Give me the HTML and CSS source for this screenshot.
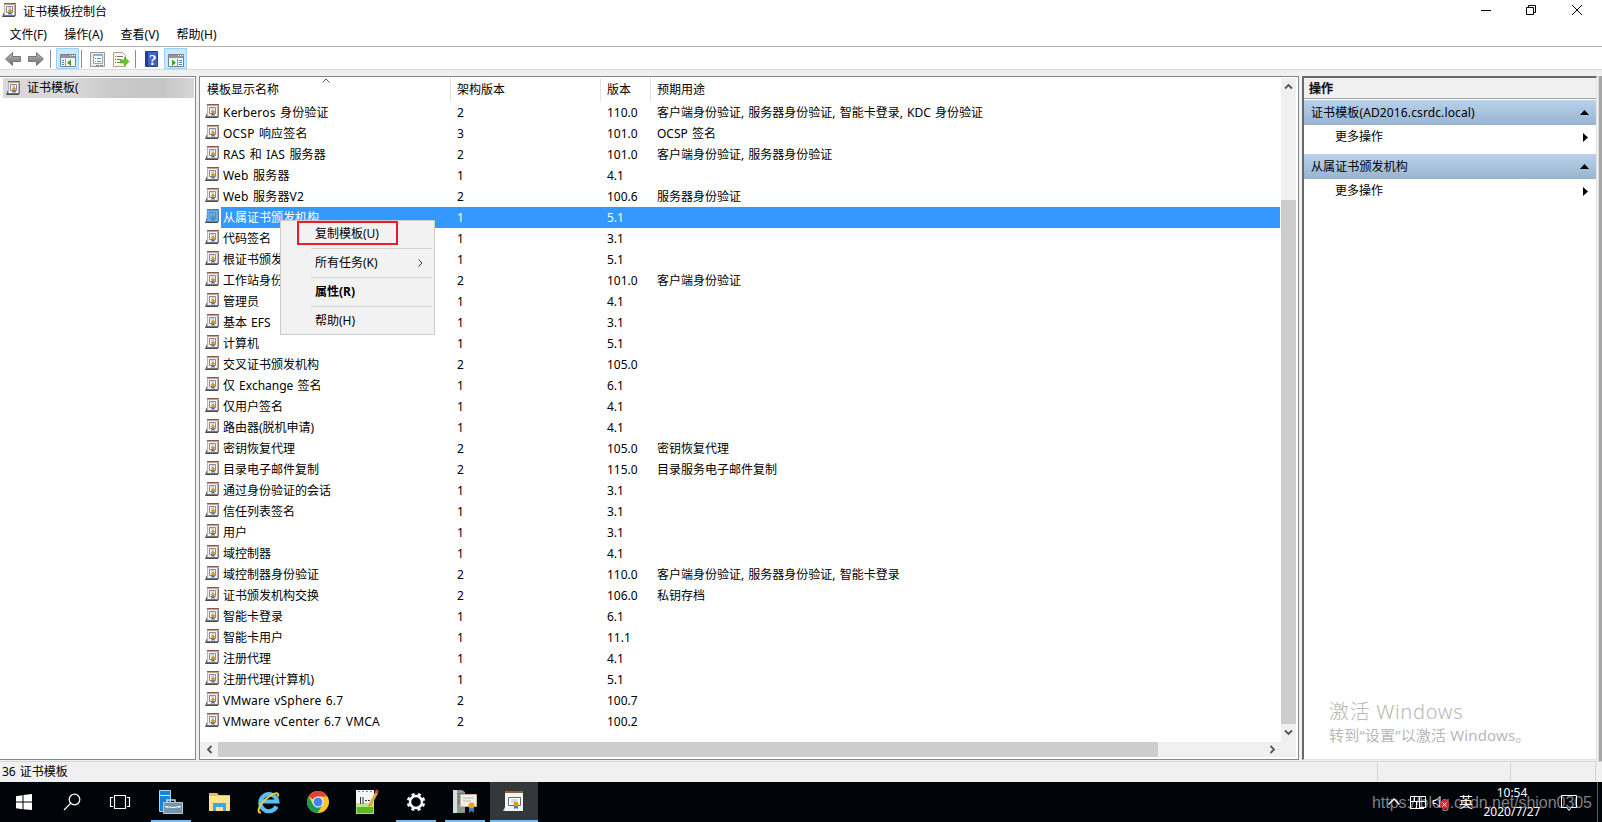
FILE: index.html
```html
<!DOCTYPE html>
<html lang="zh-CN">
<head>
<meta charset="utf-8">
<title>证书模板控制台</title>
<link rel="stylesheet" href="styles.css">
</head>
<body>
<svg class="defs" width="0" height="0">
  <symbol id="cert" viewBox="0 0 14 14">
    <path d="M0 14 2 9h11v5z" fill="#4a4a4a"/>
    <path d="M1.500 13 3 10H13v3z" fill="#d8d8d8"/>
    <path d="M2 0h12v13H2z" fill="#807873"/>
    <path d="M2 0h11v12H2z" fill="#b9b4b4"/>
    <path d="M3 2h9v10H3z" fill="#f1f0f2"/>
    <path d="M2 0h12v1H2z" fill="#8a5a48"/><path d="M2 1h12v1H2z" fill="#c3a598"/>
    <path d="M4.500 3.500h6v6h-6z" fill="#fff" stroke="#85889a"/>
    <path d="M6 5h3" stroke="#9ba6cc"/>
    <path d="M6.500 9h3v3L8 11l-1.500 1z" fill="#3564a8"/>
    <path d="M8 5.500 10.300 7.800 8 10.300 5.700 7.800z" fill="#dd9418"/>
  </symbol>
</svg>
<div class="window">
  <header class="title">
    <svg class="app-icon"><use href="#cert"/></svg><span>证书模板控制台</span>
    <svg class="caption" viewBox="0 0 104 12" fill="none" stroke="#000">
      <path d="M0 6.500h10M45.500 3.500h7v7h-7zM47.500 3.500v-2h7v7h-2M91 1l10 10M101 1 91 11"/>
    </svg>
  </header>
  <nav class="menubar"><span>文件(F)</span><span>操作(A)</span><span>查看(V)</span><span>帮助(H)</span></nav>
  <div class="toolbar">
    <svg width="200" height="22" viewBox="0 0 200 22">
      <defs><linearGradient id="ar" x2="0" y2="1"><stop stop-color="#b8b8b8"/><stop offset="1" stop-color="#6d6d6d"/></linearGradient></defs>
      <path d="M5.500 12 12.500 5.500V9.500H20.500V14.500H12.500V18.500z" fill="url(#ar)" stroke="#777"/>
      <path d="M43.500 12 36.500 5.500V9.500H28.500V14.500H36.500V18.500z" fill="url(#ar)" stroke="#777"/>
      <path d="M50.500 3v18M81.500 3v18M135.500 3v18" stroke="#8c8c8c"/>
      <path d="M56.500 1.500h22v20h-22zM164.500 1.500h22v20h-22z" fill="#cce8ff" stroke="#99d1ff"/>
      <path d="M60.500 7.500h15v12h-15z" fill="#f7f7f7" stroke="#7a7f88"/>
      <path d="M61 8h14v3H61z" fill="#8d95a0"/><path d="M61 11.500h14" stroke="#eef"/>
      <path d="M70 8.500h1M72 8.500h1M74 8.500h1" stroke="#fff"/>
      <path d="M65.500 12v7" stroke="#8d95a0"/>
      <path d="M62 13.500h2M62 15.500h2M62 17.500h2" stroke="#3f7fc5"/>
      <path d="M71 12.500v6.500l-4-3.200z" fill="#37a51f"/>
      <path d="M90.500 5.500h14v14h-14z" fill="#eee" stroke="#999"/>
      <path d="M93.500 7.500h9v9h-9z" fill="#fff" stroke="#9aa3ad"/>
      <path d="M94 8.500h8" stroke="#9ab4d0"/><path d="M95 11.500h1M95 14.500h1M97 11.500h4M97 14.500h4" stroke="#4d93d0"/><path d="M96 18.500h3M100 18.500h3" stroke="#888"/>
      <path d="M113.500 5.500h9l3 3v11h-12z" fill="#fdf8df" stroke="#a9a595"/>
      <path d="M115 9.500h1M115 12.500h1M115 15.500h1M117 9.500h6M117 12.500h4M117 15.500h4" stroke="#68758d"/>
      <path d="M120.500 13h4v-3l4.500 4.500L124.500 19v-3h-4z" fill="#65c62f" stroke="#4c9e24" stroke-width=".6"/>
      <path d="M145.500 4.500h12v15h-12z" fill="#3f62c5" stroke="#253d89"/><path d="M146 5h2v14h-2z" fill="#223d94"/>
      <text x="149" y="17.500" class="help">?</text>
      <path d="M168.500 7.500h15v12h-15z" fill="#f7f7f7" stroke="#7a7f88"/>
      <path d="M169 8h14v3h-14z" fill="#8d95a0"/><path d="M178 8.500h1M180 8.500h1M182 8.500h1" stroke="#fff"/>
      <path d="M177.500 12v7" stroke="#8d95a0"/><path d="M179 13.500h3M179 15.500h3M179 17.500h3" stroke="#3f7fc5"/>
      <path d="M172 12.500v6.500l4-3.200z" fill="#37a51f"/>
    </svg>
  </div>
  <main class="body">
    <section class="tree"><div class="node"><svg class="app-icon"><use href="#cert"/></svg><span>证书模板(</span></div></section>
    <section class="list">
      <div class="grid">
        <div class="head"><span class="h1">模板显示名称</span><span>架构版本</span><span>版本</span><span>预期用途</span>
          <svg class="sort" viewBox="0 0 8 5"><path d="M.5 4.500 4 1l3.500 3.500" fill="none" stroke="#555"/></svg>
        </div>
        <div class="row latin"><svg><use href="#cert"/></svg><span>Kerberos 身份验证</span><span>2</span><span>110.0</span><span>客户端身份验证, 服务器身份验证, 智能卡登录, KDC 身份验证</span></div>
        <div class="row latin"><svg><use href="#cert"/></svg><span>OCSP 响应签名</span><span>3</span><span>101.0</span><span>OCSP 签名</span></div>
        <div class="row latin"><svg><use href="#cert"/></svg><span>RAS 和 IAS 服务器</span><span>2</span><span>101.0</span><span>客户端身份验证, 服务器身份验证</span></div>
        <div class="row latin"><svg><use href="#cert"/></svg><span>Web 服务器</span><span>1</span><span>4.1</span><span></span></div>
        <div class="row latin"><svg><use href="#cert"/></svg><span>Web 服务器V2</span><span>2</span><span>100.6</span><span>服务器身份验证</span></div>
        <div class="row selected"><svg><use href="#cert"/><path class="tint" d="M2 0h12v13H1z"/></svg><span>从属证书颁发机构</span><span>1</span><span>5.1</span><span></span></div>
        <div class="row"><svg><use href="#cert"/></svg><span>代码签名</span><span>1</span><span>3.1</span><span></span></div>
        <div class="row"><svg><use href="#cert"/></svg><span>根证书颁发</span><span>1</span><span>5.1</span><span></span></div>
        <div class="row"><svg><use href="#cert"/></svg><span>工作站身份</span><span>2</span><span>101.0</span><span>客户端身份验证</span></div>
        <div class="row"><svg><use href="#cert"/></svg><span>管理员</span><span>1</span><span>4.1</span><span></span></div>
        <div class="row"><svg><use href="#cert"/></svg><span>基本 EFS</span><span>1</span><span>3.1</span><span></span></div>
        <div class="row"><svg><use href="#cert"/></svg><span>计算机</span><span>1</span><span>5.1</span><span></span></div>
        <div class="row"><svg><use href="#cert"/></svg><span>交叉证书颁发机构</span><span>2</span><span>105.0</span><span></span></div>
        <div class="row"><svg><use href="#cert"/></svg><span>仅 Exchange 签名</span><span>1</span><span>6.1</span><span></span></div>
        <div class="row"><svg><use href="#cert"/></svg><span>仅用户签名</span><span>1</span><span>4.1</span><span></span></div>
        <div class="row"><svg><use href="#cert"/></svg><span>路由器(脱机申请)</span><span>1</span><span>4.1</span><span></span></div>
        <div class="row"><svg><use href="#cert"/></svg><span>密钥恢复代理</span><span>2</span><span>105.0</span><span>密钥恢复代理</span></div>
        <div class="row"><svg><use href="#cert"/></svg><span>目录电子邮件复制</span><span>2</span><span>115.0</span><span>目录服务电子邮件复制</span></div>
        <div class="row"><svg><use href="#cert"/></svg><span>通过身份验证的会话</span><span>1</span><span>3.1</span><span></span></div>
        <div class="row"><svg><use href="#cert"/></svg><span>信任列表签名</span><span>1</span><span>3.1</span><span></span></div>
        <div class="row"><svg><use href="#cert"/></svg><span>用户</span><span>1</span><span>3.1</span><span></span></div>
        <div class="row"><svg><use href="#cert"/></svg><span>域控制器</span><span>1</span><span>4.1</span><span></span></div>
        <div class="row"><svg><use href="#cert"/></svg><span>域控制器身份验证</span><span>2</span><span>110.0</span><span>客户端身份验证, 服务器身份验证, 智能卡登录</span></div>
        <div class="row"><svg><use href="#cert"/></svg><span>证书颁发机构交换</span><span>2</span><span>106.0</span><span>私钥存档</span></div>
        <div class="row"><svg><use href="#cert"/></svg><span>智能卡登录</span><span>1</span><span>6.1</span><span></span></div>
        <div class="row"><svg><use href="#cert"/></svg><span>智能卡用户</span><span>1</span><span>11.1</span><span></span></div>
        <div class="row"><svg><use href="#cert"/></svg><span>注册代理</span><span>1</span><span>4.1</span><span></span></div>
        <div class="row"><svg><use href="#cert"/></svg><span>注册代理(计算机)</span><span>1</span><span>5.1</span><span></span></div>
        <div class="row latin"><svg><use href="#cert"/></svg><span>VMware vSphere 6.7</span><span>2</span><span>100.7</span><span></span></div>
        <div class="row latin"><svg><use href="#cert"/></svg><span>VMware vCenter 6.7 VMCA</span><span>2</span><span>100.2</span><span></span></div>
      </div>
      <div class="vbar">
        <svg viewBox="0 0 15 17"><path d="M4 10.500 7.500 7l3.500 3.500"/></svg>
        <div class="vthumb"></div>
        <svg viewBox="0 0 15 17"><path d="M4 6.500 7.500 10l3.500-3.500"/></svg>
      </div>
      <div class="hbar">
        <svg viewBox="0 0 17 15"><path d="M10.500 4 7 7.500l3.500 3.500"/></svg>
        <div class="hthumb"></div>
        <svg viewBox="0 0 17 15"><path d="M6.500 4 10 7.500 6.500 11"/></svg>
      </div>
    </section>
    <aside class="actions">
      <h2>操作</h2>
      <div class="band"><span>证书模板(AD2016.csrdc.local)</span><svg viewBox="0 0 9 5"><path d="M0 5 4.500 0 9 5z"/></svg></div>
      <div class="more"><span>更多操作</span><svg viewBox="0 0 5 9"><path d="M0 0l5 4.500L0 9z"/></svg></div>
      <div class="band"><span>从属证书颁发机构</span><svg viewBox="0 0 9 5"><path d="M0 5 4.500 0 9 5z"/></svg></div>
      <div class="more"><span>更多操作</span><svg viewBox="0 0 5 9"><path d="M0 0l5 4.500L0 9z"/></svg></div>
      <div class="activate"><b>激活 Windows</b><span>转到“设置”以激活 Windows。</span></div>
    </aside>
    <div class="edge"></div>
  </main>
  <footer class="status"><span>36 证书模板</span><i></i><i></i><i></i></footer>
</div>

<div class="menu">
  <div class="item marked">复制模板(U)</div>
  <div class="item">所有任务(K)<svg viewBox="0 0 5 8"><path d="M.5.500 4 4 .5 7.500" fill="none" stroke="#333"/></svg></div>
  <div class="item strong">属性(R)</div>
  <div class="item">帮助(H)</div>
</div>

<div class="taskbar">
  <div class="task"><svg viewBox="0 0 48 40"><path fill="#fff" d="M16 14.200 22.500 13.200V19.500H16zM23.500 13 32 12v7.500h-8.500zM16 20.500h6.500v6.700L16 26.200zM23.500 20.500H32V28l-8.500-.8z"/></svg></div>
  <div class="task"><svg viewBox="0 0 48 40" fill="none" stroke="#fff" stroke-width="1.300"><circle cx="25.500" cy="17.500" r="5.300"/><path d="M21.600 21.400 15 28"/></svg></div>
  <div class="task"><svg viewBox="0 0 48 40" fill="none" stroke="#fff" stroke-width="1.200"><path d="M16.500 13.500h11v13h-11zM15 15.500h-2.500v9H15M29 15.500h2.500v9H29"/></svg></div>
  <div class="task open"><svg viewBox="0 0 48 40"><path d="M12.500 8.500h11v21h-11z" fill="#1785d2" stroke="#a9d7f5"/><path d="M12 13.500h11" stroke="#cbe8fa"/><path d="M20 21v-3h8v3" fill="none" stroke="#cbd8e3" stroke-width="1.500"/><path d="M16.500 20.500h19v11h-19z" fill="#7593ad" stroke="#b8cad9"/><path d="M18 24.500q8 2 16 0M20 24v2M32 24v2" stroke="#fff" fill="none"/></svg></div>
  <div class="task"><svg viewBox="0 0 48 40"><path d="M13 11h8l2 2h11v16H13z" fill="#e9bd50"/><path d="M13 14h21v15H13z" fill="#ffe391"/><path d="M17 29v-8h13v8h-3v-4h-7v4z" fill="#35aaea"/></svg></div>
  <div class="task"><svg viewBox="0 0 48 40"><path d="M31.500 24.500a8.500 8.500 0 1 1 .8-5H18" fill="none" stroke="#57bff3" stroke-width="4.200"/><path d="M16 30.500c-5 1-2-8 5.500-14s13-7 11.500-2" fill="none" stroke="#f6c92e" stroke-width="2"/></svg></div>
  <div class="task"><svg viewBox="0 0 48 40"><circle cx="24" cy="20" r="11" fill="#fbc52d"/><path d="M24 20 14.500 14.500A11 11 0 0 1 33.500 14.500H24z" fill="#db4437"/><path d="M14.500 14.500A11 11 0 0 0 23.500 31L28.800 22.500 24 20 19 22.500z" fill="#169b59"/><circle cx="24" cy="20" r="5.500" fill="#fff"/><circle cx="24" cy="20" r="4.500" fill="#4285f4"/></svg></div>
  <div class="task"><svg viewBox="0 0 48 40"><path d="M13 8h18v24H13z" fill="#f6f6f6"/><path d="M13.500 21h17v10.500h-17z" fill="#5bb922"/><path d="M13 21h18v4H13z" fill="#bde58b"/><path d="M15 9.500h14" stroke="#888" stroke-dasharray="2 2"/><path d="M17.500 15v7M20 15v7M22 18.500h2M25 18.500h2" stroke="#333"/><path d="M26 25 34 10" stroke="#dfa63a" stroke-width="3"/><path d="m33 11 1.500-3" stroke="#b94b3f" stroke-width="3"/></svg></div>
  <div class="task open"><svg viewBox="0 0 48 40" fill="none" stroke="#fff"><circle cx="24" cy="20" r="6" stroke-width="2.500"/><circle cx="24" cy="20" r="8" stroke-width="2.500" stroke-dasharray="3.140 3.143" transform="rotate(11 24 20)"/></svg></div>
  <div class="task open"><svg viewBox="0 0 48 40"><path d="M12 8h9l3 2v21H12z" fill="#8d9792"/><path d="M12 8h4v23h-4z" fill="#d8dcda"/><path d="M17 12h6M17 15h5M17 18h5M17 21h5" stroke="#555"/><path d="M16 28h2v2h-2z" fill="#42d63d"/><path d="M19.500 12.500h16v12h-16z" fill="#f5eee5" stroke="#ccb6a2"/><path d="M22 16h11M22 19h8" stroke="#abb"/><path d="M28 24h5v7l-2.500-2-2.500 2z" fill="#2b79ce"/><circle cx="30.500" cy="23.500" r="3" fill="#e7a020"/></svg></div>
  <div class="task open active"><svg viewBox="0 0 48 40"><path d="m13 29 3-6h16v6z" fill="#ddd"/><path d="M15 9h18v20H15z" fill="#f3f3f1"/><path d="M15 9h18v2H15z" fill="#8e5f4b"/><path d="M18.500 15.500h12v8h-12z" fill="#fff" stroke="#666"/><path d="M21 18h7M21 20h5" stroke="#99b9e5"/><path d="M24 22h4v5l-2-1-2 1z" fill="#2b79ce"/><circle cx="26" cy="22" r="2.500" fill="#dd9b20"/></svg></div>
  <div class="url">https://blog.csdn.net/shion0305</div>
  <div class="tray">
    <svg width="64" height="20" viewBox="0 0 64 20" fill="none" stroke="#fff"><path d="M.5 12.500 6 7l5.500 5.500" stroke-width="1.300"/><path d="M22.500 4.500h15v11h-6M31.500 4.500v12M22 9.500h16M26.500 4.500v5M22.500 4.500v12M22 16.500h14M28.500 9.500v7"/><path d="M45 8.500h3l4-4v11l-4-4h-3z"/><circle cx="56.500" cy="12.500" r="4.500" fill="#e2262d" stroke="none"/><path d="m54.500 10.500 4 4m0-4-4 4"/></svg>
    <span class="ime">英</span>
    <div class="clock"><span>10:54</span><span>2020/7/27</span></div>
    <svg class="note" viewBox="0 0 17 17" fill="none" stroke="#fff"><path d="M.5.500h15v12H10L8 15.500 6 12.500H.5z"/></svg>
  </div>
</div>
</body>
</html>
```
FILE: styles.css
```css
*, *::before { box-sizing: border-box; }
body { margin: 0; width: 1602px; height: 822px; overflow: hidden; position: relative; background: #fff; color: #000; font: 12px/20px "Noto Sans", "Noto Sans CJK SC", sans-serif; }
.defs { position: absolute; }
svg { display: block; flex: none; }
span { white-space: nowrap; }
.window { height: 782px; display: flex; flex-direction: column; background: #f0f0f0; }
.app-icon { width: 14px; height: 14px; }
.title { height: 23px; background: #fff; display: flex; align-items: center; padding-left: 2px; gap: 7px; }
.title .app-icon { margin-top: -3px; }
.caption { width: 104px; height: 12px; margin: -3px 17px 0 auto; }
.menubar { height: 23px; background: #fff; display: flex; gap: 17.4px; padding: 2px 0 0 9.5px; }
.toolbar { height: 24px; border-top: 1px solid #b0b0b0; border-bottom: 1px solid #dadada; background: #fff; }
.help { font: bold 15px "Liberation Serif", serif; fill: #fff; }
.body { height: 691px; padding-top: 6px; display: flex; }
.tree { width: 196px; height: 684px; border: 1px solid #828790; border-left: 0; background: #fff; padding: 1px 1px 0 3px; margin-right: 3px; }
.node { height: 20px; display: flex; align-items: center; gap: 7px; background: linear-gradient(90deg, #d9d9d9 0, #d9d9d9 70px, #c9c9c9 110px, #c6c6c6 160px, #d6d6d6 100%); padding-left: 3px; }
.list { width: 1100px; height: 684px; border: 1px solid #828790; background: #fff; display: grid; grid-template: 664px 15px / 1081px 15px; padding: 1px 0 0 0; margin-right: 4px; }
.head { display: grid; grid-template-columns: 251px 150px 50px 1fr; height: 24px; line-height: 23px; position: relative; }
.head span { border-right: 1px solid #e3e3e3; padding-left: 6px; }
.head .h1 { padding-left: 7px; }
.head span:last-of-type { border: 0; }
.sort { position: absolute; left: 122px; top: 0; width: 8px; height: 5px; }
.row { height: 21px; display: grid; grid-template-columns: 21px 234px 150px 50px 625px; line-height: 21px; word-spacing: 1px; }
.row svg { width: 14px; height: 14px; margin: 2px 0 0 5px; }
.row span { padding-left: 2px; overflow: hidden; }
.latin span:nth-of-type(1) { letter-spacing: .2px; }
.selected span { background: #3399ff; color: #fff; }
.tint { fill: #2c8fee; opacity: .65; }
.vbar { display: flex; flex-direction: column; background: #f0f0f0; }
.vbar svg { width: 15px; height: 17px; }
.vbar svg path, .hbar svg path { fill: none; stroke: #555; stroke-width: 1.8; }
.vthumb { background: #cdcdcd; height: 524px; margin-top: 105px; }
.hbar { grid-column: 1 / 3; display: flex; background: #f0f0f0; padding: 0 15px 0 1px; }
.hbar svg { width: 17px; height: 15px; }
.hthumb { width: 940px; background: #cdcdcd; margin-right: auto; }
.actions { width: 295px; height: 684px; border: 1px solid #e3e3e3; border-top: 2px solid #696969; border-left: 2px solid #696969; background: #fff; margin-left: -1px; }
.actions h2 { margin: 0; height: 21px; border-bottom: 1px solid #a0a0a0; background: #f0f0f0; font-size: 12px; line-height: 21px; font-weight: 500; padding-left: 5px; -webkit-text-stroke: .3px #000; }
.band { height: 25px; margin-top: 1px; background: linear-gradient(#b9d1ea, #99b4d1); display: flex; justify-content: space-between; align-items: center; padding: 0 7px; letter-spacing: .12px; }
.band svg { width: 9px; height: 5px; }
.more { height: 28px; display: flex; justify-content: space-between; align-items: center; padding: 0 8px 4px 31px; }
.more svg { width: 5px; height: 9px; }
.activate { color: #b8b8b8; margin: 492px 0 0 25px; display: flex; flex-direction: column; }
.activate b { font-weight: 300; font-size: 20px; line-height: 26px; letter-spacing: .7px; }
.activate span { font-size: 15px; line-height: 21px; letter-spacing: .15px; }
.edge { width: 4px; margin-left: auto; background: #a6a6a6; height: 685px; border-left: 1px solid #ddd; }
.status { height: 21px; display: flex; border-top: 1px solid #d7d7d7; padding: 1px 5px 1px 2px; line-height: 18px; }
.status span { width: 1375px; word-spacing: 1px; }
.status i { border-left: 1px solid #d0d0d0; width: 133px; }
.status i:nth-of-type(2) { width: 85px; }
.status i:nth-of-type(3) { width: 1px; }
.menu { position: absolute; left: 280px; top: 220px; width: 155px; height: 115px; background: #f2f2f2; border: 1px solid #ccc; padding: 0 2px 0 30px; }
.item { height: 29px; line-height: 28px; padding-left: 4px; border-bottom: 1px solid #d2d2d2; position: relative; }
.item:first-child { height: 28px; line-height: 26px; }
.item:last-child { border: 0; }
.item svg { position: absolute; right: 9px; top: 10px; width: 5px; height: 8px; }
.strong { font-weight: 700; }
.marked::before { content: ""; position: absolute; left: -14px; top: 0; width: 101px; height: 24px; border: 2px solid #ed1c24; }
.taskbar { height: 40px; background: #010409; color: #fff; display: flex; position: relative; }
.task { width: 48px; height: 40px; margin-right: 1px; position: relative; }
.task svg { width: 48px; height: 40px; }
.open::after { content: ""; position: absolute; left: 4px; bottom: 0; width: 40px; height: 2px; background: #76b9ed; }
.active { background: #34373a; }
.active::after { left: 0; width: 48px; }
.tray { margin-left: auto; width: 214px; display: flex; align-items: center; position: relative; }
.tray::before { content: ""; position: absolute; right: 4px; top: 0; width: 1px; height: 40px; background: #55585c; }
.ime { font-size: 14px; width: 20px; margin-left: 7px; }
.clock { width: 66px; display: flex; flex-direction: column; text-align: center; line-height: 19px; }
.note { width: 17px; height: 17px; margin: 2px 0 0 16px; }
.url { position: absolute; left: 1372px; top: 11px; font: 16px/20px "Liberation Sans", sans-serif; letter-spacing: -.05px; color: #7e8083; white-space: nowrap; }
```
